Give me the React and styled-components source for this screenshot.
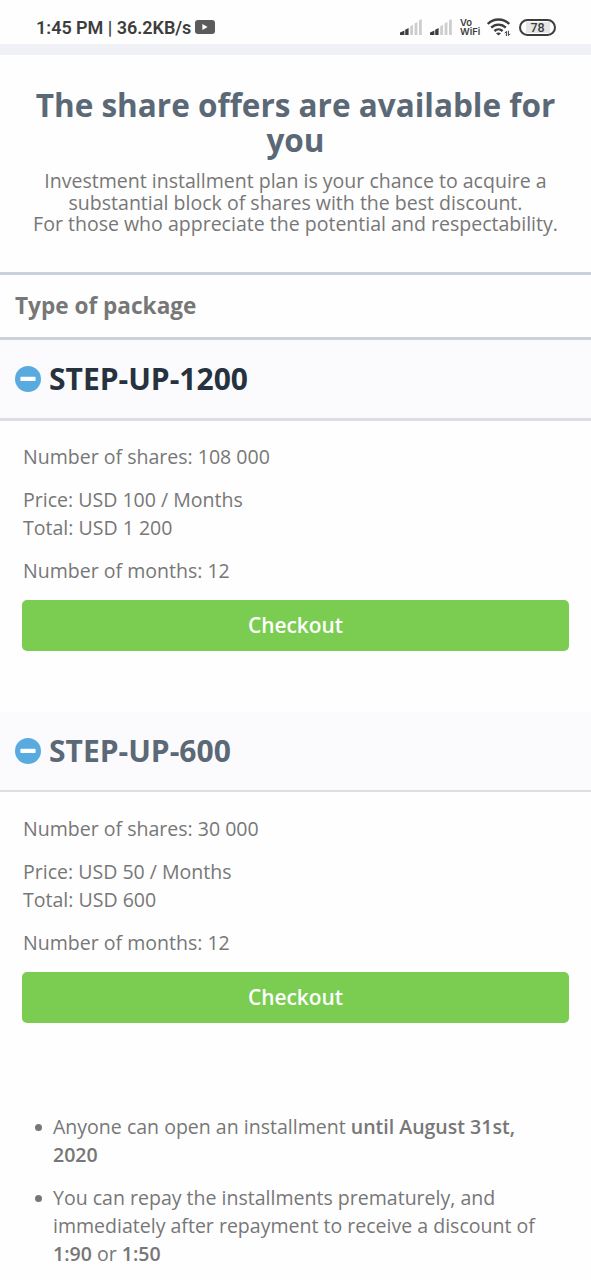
import styled, { createGlobalStyle } from "styled-components";

const packages = [
  { id: 1, name: "STEP-UP-1200", shares: "108 000", price: "100", total: "1 200", months: 12, active: true },
  { id: 2, name: "STEP-UP-600", shares: "30 000", price: "50", total: "600", months: 12, active: false },
];

const SignalIcon = () => (
  <svg width="22" height="16" viewBox="0 0 22 16">
    <path d="M0 16v-2.6l4.4-1.9V16z" fill="#3d3d3d" />
    <path d="M5.2 16v-5.2l3.4-1.8V16z" fill="#3d3d3d" />
    <path d="M10.2 16V7.4L13 5.8V16zM14.6 16V4.6L17.4 3v13zM19 16V1.6L21.8 0v16z" fill="#cdcdcd" />
  </svg>
);

const WifiIcon = () => (
  <svg width="24" height="18" viewBox="0 0 24 18">
    <g fill="none" stroke="#3d3d3d" strokeWidth="2.4">
      <path d="M.8 6a15 15 0 0 1 21.4 0" />
      <path d="M4.2 9.6a10.4 10.4 0 0 1 14.6 0" />
      <path d="M7.4 13a6 6 0 0 1 8.2 0" />
    </g>
    <path d="M9 15.2q2.5-1.4 5 0l-2.5 2.4z" fill="#3d3d3d" />
    <path d="M19.4 18v-4.6l-1.6 1.8M21.4 12.8v4.8l1.6-1.8" fill="none" stroke="#3d3d3d" />
  </svg>
);

const VideoIcon = () => (
  <svg width="20" height="14" viewBox="0 0 20 14">
    <rect width="20" height="14" rx="3" fill="#5b5b5b" />
    <path d="M7.4 4l5.2 3-5.2 3z" fill="#fff" />
  </svg>
);

const MinusIcon = () => (
  <svg width="26" height="26" viewBox="0 0 26 26">
    <circle cx="13" cy="13" r="13" fill="#58aadf" />
    <rect x="5.4" y="10.8" width="15.2" height="4.2" rx="0.8" fill="#fff" />
  </svg>
);

const Package = ({ item }) => (
  <section>
    <PackageHeader $active={item.active}>
      <MinusIcon />
      <PackageName $active={item.active}>{item.name}</PackageName>
    </PackageHeader>
    <PackageBody>
      <p>Number of shares: {item.shares}</p>
      <p>
        Price: USD {item.price} / Months
        <br />
        Total: USD {item.total}
      </p>
      <p>Number of months: {item.months}</p>
      <CheckoutButton>Checkout</CheckoutButton>
    </PackageBody>
  </section>
);

export default () => {
  return (
    <Page>
      <GlobalStyle />
      <StatusBar>
        <Clock>1:45 PM | 36.2KB/s</Clock>
        <VideoIcon />
        <StatusIcons>
          <SignalIcon />
          <SignalIcon />
          <VoWifi>
            <span>Vo</span>
            <span>WiFi</span>
          </VoWifi>
          <WifiIcon />
          <Battery>
            <BatteryLevel>78</BatteryLevel>
          </Battery>
        </StatusIcons>
      </StatusBar>
      <Intro>
        <Title>The share offers are available for you</Title>
        <Description>
          Investment installment plan is your chance to acquire a substantial
          block of shares with the best discount.
          <br />
          For those who appreciate the potential and respectability.
        </Description>
      </Intro>
      <TableHeading>Type of package</TableHeading>
      {packages.map((item) => (
        <Package key={item.id} item={item} />
      ))}
      <Terms>
        <Term>
          Anyone can open an installment <b>until August 31st, 2020</b>
        </Term>
        <Term>
          You can repay the installments prematurely, and immediately after
          repayment to receive a discount of <b>1:90</b> or <b>1:50</b>
        </Term>
      </Terms>
    </Page>
  );
};

const GlobalStyle = createGlobalStyle`
  * {
    box-sizing: border-box;
  }

  body {
    margin: 0;
    background: #fefefe;
  }

  svg {
    display: block;
    flex-shrink: 0;
  }
`;

const Page = styled.div`
  width: 100%;
  height: 1280px;
  overflow: hidden;
  color: #777;
  font-family: "Open Sans", sans-serif;
  font-size: 19.55px;
  line-height: 28px;
`;

const StatusBar = styled.header`
  display: flex;
  align-items: center;
  height: 55px;
  padding: 10px 35px 0 36px;
  border-bottom: 11px solid #eff1f6;
  color: #3d3d3d;
  font-family: Roboto, sans-serif;
`;

const Clock = styled.span`
  margin-right: 4px;
  padding-top: 2px;
  font-size: 18px;
  font-weight: 600;
  line-height: 20px;
  letter-spacing: -0.03px;
`;

const StatusIcons = styled.div`
  display: flex;
  align-items: center;
  gap: 8px;
  margin-left: auto;
`;

const VoWifi = styled.span`
  display: flex;
  flex-direction: column;
  width: 20px;
  margin-right: -1px;
  font-family: Inter, sans-serif;
  font-size: 9.5px;
  font-weight: 600;
  line-height: 9px;
`;

const Battery = styled.span`
  display: flex;
  align-items: center;
  justify-content: center;
  width: 37px;
  height: 17px;
  border: 2px solid #3d3d3d;
  border-radius: 9px;
`;

const BatteryLevel = styled.span`
  width: 24px;
  height: 11px;
  background: #e6e6e6;
  font-size: 12.5px;
  font-weight: 500;
  line-height: 12px;
  text-align: center;
`;

const Intro = styled.div`
  height: 217px;
  padding: 32px 15px 0;
  text-align: center;
`;

const Title = styled.h1`
  margin: 0 0 13px;
  color: #5b6876;
  font-size: 31.5px;
  font-weight: 700;
  line-height: 35px;
`;

const Description = styled.p`
  margin: 0;
  line-height: 21.5px;
`;

const TableHeading = styled.div`
  height: 68px;
  padding: 17px 15px 0;
  border-top: 3px solid #cbd1dc;
  border-bottom: 3px solid #cbd3d9;
  font-size: 22.6px;
  font-weight: 700;
`;

const PackageHeader = styled.div`
  display: flex;
  align-items: center;
  gap: 8px;
  height: ${(props) => (props.$active ? "81px" : "80px")};
  padding: 0 15px;
  background: #fbfbfe;
  border-bottom: ${(props) => (props.$active ? "3px" : "2px")} solid #dcdee1;
`;

const PackageName = styled.h2`
  margin: 0;
  color: ${(props) => (props.$active ? "#26323e" : "#5b6876")};
  font-size: 30px;
  font-weight: 700;
  line-height: 40px;
`;

const PackageBody = styled.div`
  padding: 22.4px 22px 61px;

  p {
    margin: 0 0 15px 1px;
  }
`;

const CheckoutButton = styled.button`
  display: block;
  width: 100%;
  height: 51px;
  padding: 0 0 1px;
  border: 0;
  border-radius: 5px;
  background: #7acd50;
  color: #fff;
  font-family: inherit;
  font-size: 20.9px;
  font-weight: 600;
`;

const Terms = styled.ul`
  margin: 0;
  padding: 29px 40px 0 53px;
  list-style: none;
`;

const Term = styled.li`
  margin-bottom: 15px;

  &::before {
    content: "";
    display: inline-block;
    width: 7px;
    height: 7px;
    margin: 0 11px 3px -18px;
    border-radius: 50%;
    background: #777;
  }

  b {
    font-weight: 600;
  }
`;
